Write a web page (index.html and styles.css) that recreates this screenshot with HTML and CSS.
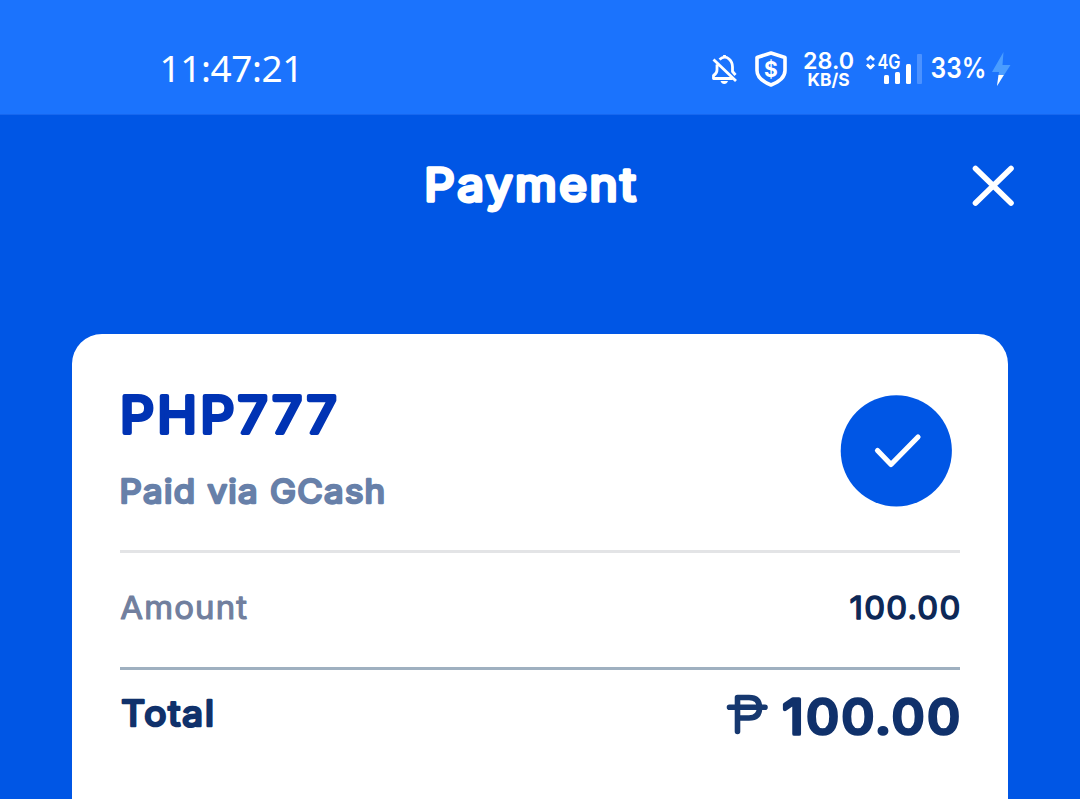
FILE: index.html
```
<!DOCTYPE html>
<html lang="en">
<head>
<meta charset="utf-8">
<title>Payment</title>
<link rel="stylesheet" href="styles.css">
</head>
<body>
<div class="status">
  <svg class="clock" width="144" height="40" viewBox="159 49 144 40"><text class="time" x="159.500" y="82" textLength="144">11:47:21</text></svg>
  <svg class="indicators" width="304" height="44" viewBox="708 47 304 44">
    <g class="line bell"><path d="M717 64.500v5.500q0 3.500-3.500 5.500v3h19M719.500 59.500q5-4.500 9.500-0.500q3.500 3 3.500 8v4.500l3 3.500M713.500 59.500l22.500 21.500M724.500 55v2"/><path class="solid" d="M720.500 81h7.500q-1 3-3.750 3t-3.750-3z"/></g>
    <g class="line shield"><path d="M771 53l14 4.500v13q0 9-14 14.500q-14-5.500-14-14.500v-13z"/></g>
    <text class="dollar" x="771" y="76.800" text-anchor="middle">$</text>
    <text class="rate" x="803" y="69" textLength="51" lengthAdjust="spacingAndGlyphs">28.0</text>
    <text class="unit" x="807.500" y="86" textLength="42" lengthAdjust="spacingAndGlyphs">KB/S</text>
    <path class="line arrows" d="M867 60l3.500-3.500l3.500 3.500M867 64.500l3.500 3.500l3.500-3.500"/>
    <text class="net" x="877.500" y="68.500" textLength="23" lengthAdjust="spacingAndGlyphs">4G</text>
    <g class="solid"><rect x="884" y="75" width="5" height="9" rx="1.500"/><rect x="895" y="72" width="5" height="12" rx="1.500"/><rect x="906" y="64" width="5" height="20" rx="1.500"/></g>
    <rect class="faint" x="917" y="54" width="5" height="30" rx="1"/>
    <text class="battery" x="930.500" y="78" textLength="56" lengthAdjust="spacingAndGlyphs">33%</text>
    <path class="bolt" d="M1003.500 52L992 72h7l-2 14l13.500-21h-8z"/>
    <path class="solid" d="M998.500 75h5.300L997 86z"/>
  </svg>
</div>
<header class="header">
  <svg class="title" width="216" height="56" viewBox="424 160 216 56"><text class="round payment" x="424.300" y="201.200" textLength="214" lengthAdjust="spacingAndGlyphs">Payment</text></svg>
  <svg class="close" width="46" height="46" viewBox="970 163 46 46"><path d="M975.500 168.500l35.500 34.500M1011 168.500l-35.500 34.500"/></svg>
</header>
<main class="card">
  <section class="summary">
    <div class="merchant">
      <svg width="222" height="56" viewBox="120 388 222 56"><text class="round name" x="120" y="433.400" textLength="220" lengthAdjust="spacingAndGlyphs">PHP777</text></svg>
      <svg width="268" height="40" viewBox="120 472 268 40"><text class="round via" x="119.500" y="503" textLength="267" lengthAdjust="spacingAndGlyphs">Paid via GCash</text></svg>
    </div>
    <svg class="badge" width="112" height="112" viewBox="840 395 112 112"><circle cx="896.300" cy="450.800" r="55.600"/><path d="M877.500 450.500l13.500 14l27-27.500"/></svg>
  </section>
  <section class="row">
    <svg width="130" height="40" viewBox="120 588 130 40"><text class="round amount" x="120.300" y="618.500" textLength="128" lengthAdjust="spacingAndGlyphs">Amount</text></svg>
    <svg width="112" height="40" viewBox="848 588 112 40"><text class="round value" x="849.500" y="618.500" textLength="112" lengthAdjust="spacingAndGlyphs">100.00</text></svg>
  </section>
  <section class="row total">
    <svg width="96" height="48" viewBox="120 692 96 48"><text class="round label" x="121.300" y="726.200" textLength="94.500" lengthAdjust="spacingAndGlyphs">Total</text></svg>
    <svg width="236" height="52" viewBox="724 690 236 52">
      <path class="peso" d="M737.500 731.500V697.500h11.500q10.500 0 10.500 10.250t-10.500 10.250h-11.500M729.500 707.200h35.500"/>
      <text class="round sum" x="782.500" y="733.500" textLength="180" lengthAdjust="spacingAndGlyphs">100.00</text>
    </svg>
  </section>
</main>
</body>
</html>
```
FILE: styles.css
```
* { box-sizing: border-box; }
html, body { height: 100%; }
body { margin: 0; background: #0056e5; overflow: hidden; font-family: Inter, "Liberation Sans", sans-serif; }
svg { display: block; flex: none; overflow: visible; }

.status { height: 115px; background: #1b73fd; border-bottom: 1px solid #1767ef; display: flex; justify-content: space-between; align-items: flex-start; padding: 47px 68px 0 159px; }
.clock { margin-top: 2px; }
.status text { fill: #fff; }
.status .time { font-family: "Noto Sans", sans-serif; font-size: 37px; }
.dollar { font-size: 21px; font-weight: 700; }
.rate { font-size: 23px; font-weight: 600; }
.unit { font-size: 17.5px; font-weight: 700; }
.net { font-size: 19.5px; font-weight: 600; }
.battery { font-size: 28.5px; font-weight: 600; }
.line { fill: none; stroke: #fff; stroke-width: 2.8; stroke-linejoin: round; }
.shield { stroke-width: 3.6; }
.solid { fill: #fff; stroke: none; }
.faint { fill: #4c92ff; }
.bolt { fill: #4a9dff; }

.header { height: 219px; display: grid; grid-template-columns: 1fr auto; align-items: start; padding: 45px 64px 0 424px; }
.close { margin-top: 3px; fill: none; stroke: #fff; stroke-width: 5.6; stroke-linecap: round; }

.round { stroke-linejoin: round; stroke-linecap: round; font-weight: 400; }
.payment { font-size: 45.500px; letter-spacing: 2.4px; fill: #fff; stroke: #fff; stroke-width: 3.7px; }
.name { font-size: 50px; letter-spacing: 3px; fill: #0033b4; stroke: #0033b4; stroke-width: 4.1px; }
.via { font-size: 32px; letter-spacing: 1.2px; fill: #6780a9; stroke: #6780a9; stroke-width: 2.4px; }
.amount { font-size: 31.500px; letter-spacing: 1.1px; fill: #717f9e; stroke: #717f9e; stroke-width: 1.1px; }
.value { font-size: 31.500px; letter-spacing: 1.2px; fill: #0d2857; stroke: #0d2857; stroke-width: 1.400px; }
.label { font-size: 35.2px; letter-spacing: 1.8px; fill: #10316b; stroke: #10316b; stroke-width: 2.7px; }
.sum { font-size: 47.3px; letter-spacing: 2.4px; fill: #10316b; stroke: #10316b; stroke-width: 3.7px; }
.peso { fill: none; stroke: #16386f; stroke-width: 5.6; stroke-linecap: round; stroke-linejoin: round; }

.card { margin: 0 72px; height: 465px; padding: 0 48px; background: #fff; border-radius: 30px 30px 0 0; }
.summary { height: 219px; padding: 54px 8px 0 0; border-bottom: 3px solid #e3e4e6; display: flex; justify-content: space-between; align-items: flex-start; }
.merchant { display: grid; gap: 28px; }
.badge { margin-top: 7px; }
.badge circle { fill: #0056e5; }
.badge path { fill: none; stroke: #fff; stroke-width: 5.2; stroke-linecap: round; stroke-linejoin: round; }
.row { height: 117px; padding-top: 35px; border-bottom: 3px solid #9fb0c0; display: flex; justify-content: space-between; align-items: flex-start; }
.total { padding-top: 20px; border: 0; }
.total svg:first-child { margin-top: 2px; }
```
